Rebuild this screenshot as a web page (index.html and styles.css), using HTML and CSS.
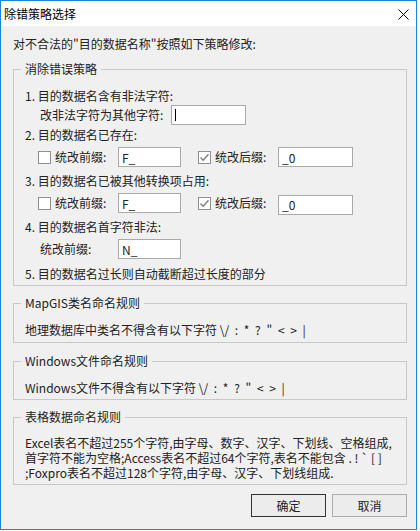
FILE: index.html
```html
<!DOCTYPE html>
<html lang="zh-CN">
<head>
    <meta charset="UTF-8">
    <title>除错策略选择</title>
    <link rel="stylesheet" href="styles.css">
</head>
<body>
    <div class="dialog">
        <div class="titlebar">
            <span class="title">除错策略选择</span>
            <svg class="close" width="11" height="11" viewBox="0 0 11 11">
                <path d="M0.5 0.5 L10.5 10.5 M10.5 0.5 L0.5 10.5" stroke="#000" stroke-width="1" fill="none"/>
            </svg>
        </div>

        <div class="content">
            <p class="intro">对不合法的"目的数据名称"按照如下策略修改:</p>

            <div class="group group-strategy">
                <span class="group-title">消除错误策略</span>

                <div class="line">1. 目的数据名含有非法字符:</div>
                <div class="row row-replace">
                    <span class="label label-replace">改非法字符为其他字符:</span>
                    <div class="textbox textbox-wide"><span class="caret"></span></div>
                </div>

                <div class="line line-after-replace">2. 目的数据名已存在:</div>
                <div class="row row-checks">
                    <span class="check"></span>
                    <span class="label label-short">统改前缀:</span>
                    <input class="textbox textbox-narrow" type="text" value="F_">
                    <span class="check checked">
                        <svg width="11" height="11" viewBox="0 0 11 11"><path d="M1.5 5.5 L4.2 8.3 L9.5 2.2" stroke="#7a7a7a" stroke-width="1.3" fill="none"/></svg>
                    </span>
                    <span class="label label-short">统改后缀:</span>
                    <input class="textbox textbox-wide" type="text" value="_0">
                </div>

                <div class="line">3. 目的数据名已被其他转换项占用:</div>
                <div class="row row-checks">
                    <span class="check"></span>
                    <span class="label label-short">统改前缀:</span>
                    <input class="textbox textbox-narrow" type="text" value="F_">
                    <span class="check checked">
                        <svg width="11" height="11" viewBox="0 0 11 11"><path d="M1.5 5.5 L4.2 8.3 L9.5 2.2" stroke="#7a7a7a" stroke-width="1.3" fill="none"/></svg>
                    </span>
                    <span class="label label-short">统改后缀:</span>
                    <input class="textbox textbox-wide textbox-low" type="text" value="_0">
                </div>

                <div class="line">4. 目的数据名首字符非法:</div>
                <div class="row row-prefix">
                    <span class="label label-prefix">统改前缀:</span>
                    <input class="textbox textbox-narrow" type="text" value="N_">
                </div>

                <div class="line line-last">5. 目的数据名过长则自动截断超过长度的部分</div>
            </div>

            <div class="group group-mapgis">
                <span class="group-title">MapGIS类名命名规则</span>
                <div class="line">地理数据库中类名不得含有以下字符 <span class="symbols">\/ : * ? " &lt; &gt; |</span></div>
            </div>

            <div class="group group-windows">
                <span class="group-title">Windows文件命名规则</span>
                <div class="line">Windows文件不得含有以下字符 <span class="symbols">\/ : * ? " &lt; &gt; |</span></div>
            </div>

            <div class="group group-table">
                <span class="group-title">表格数据命名规则</span>
                <div class="rules">
                    <div class="rule-line">Excel表名不超过255个字符,由字母、数字、汉字、下划线、空格组成,</div>
                    <div class="rule-line">首字符不能为空格;Access表名不超过64个字符,表名不能包含 . ! ` [ ]</div>
                    <div class="rule-line">;Foxpro表名不超过128个字符,由字母、汉字、下划线组成.</div>
                </div>
            </div>

            <div class="actions">
                <button class="btn btn-default" type="button">确定</button>
                <button class="btn" type="button">取消</button>
            </div>
        </div>
    </div>
</body>
</html>
```

FILE: styles.css
```css
* {
    box-sizing: border-box;
    margin: 0;
    padding: 0;
}

body {
    background: #fff;
    font-family: "Noto Sans CJK SC", "Liberation Sans", sans-serif;
    font-size: 12px;
    color: #222;
}

.dialog {
    width: 417px;
    height: 530px;
    border: 1px solid #1883d7;
    background: #f0f0f0;
}

.titlebar {
    height: 25px;
    background: #fff;
    display: flex;
    align-items: center;
    justify-content: space-between;
    padding: 0 7px 0 3px;
}

.title {
    color: #000;
    line-height: 18px;
}

.close {
    display: block;
    margin-top: 1px;
}

.content {
    padding: 9px 9px 0 12px;
}

.intro {
    line-height: 18px;
}

/* group boxes */
.group {
    position: relative;
    border: 1px solid #c8c8c8;
    margin-top: 17px;
    padding: 17px 4px 2px 11px;
}

.group-title {
    position: absolute;
    top: -10px;
    left: 7px;
    padding: 0 4px;
    line-height: 18px;
    background: #f0f0f0;
    white-space: nowrap;
}

.group-strategy {
    margin-top: 16px;
}

.group-mapgis {
    padding-bottom: 3px;
}

.group-windows {
    margin-top: 18px;
}

.group-table {
    padding-bottom: 4px;
}

.line {
    height: 18px;
    line-height: 18px;
    white-space: nowrap;
}

.symbols {
    word-spacing: 3px;
}

.row {
    height: 20px;
    display: flex;
    align-items: center;
    white-space: nowrap;
}

.line + .row {
    margin-top: 3px;
}

.row + .line {
    margin-top: 5px;
}

.line + .row-replace {
    margin-top: 0;
}

.row + .line-after-replace {
    margin-top: 1px;
}

.row + .line-last {
    margin-top: 6px;
}

.row-replace,
.row-prefix {
    padding-left: 15px;
}

.row-checks {
    padding-left: 13px;
}

.label {
    line-height: 18px;
}

.label-replace {
    width: 131px;
}

.label-short {
    width: 63px;
}

.label-prefix {
    width: 78px;
}

/* inputs */
.textbox {
    display: block;
    height: 20px;
    border: 1px solid #a9a9a9;
    background: #fff;
    padding: 0 3px;
    font: inherit;
    color: #222;
    outline: none;
    position: relative;
}

.textbox-narrow {
    width: 63px;
    margin-right: 17px;
}

.textbox-wide {
    width: 75px;
}

.textbox-low {
    margin-top: 3px;
}

.caret {
    position: absolute;
    left: 3px;
    top: 3px;
    width: 1px;
    height: 12px;
    background: #000;
}

.check {
    width: 13px;
    height: 13px;
    border: 1px solid #8f8f8f;
    background: #fff;
    margin-right: 4px;
    display: flex;
    align-items: center;
    justify-content: center;
}

.check svg {
    display: block;
}

.rule-line {
    height: 15px;
    line-height: 15px;
    white-space: nowrap;
}

/* buttons */
.actions {
    display: flex;
    justify-content: flex-end;
    gap: 6px;
    margin-top: 9px;
}

.btn {
    width: 75px;
    height: 23px;
    border: 1px solid #adadad;
    background: #ececec;
    font: inherit;
    color: #222;
}

.btn-default {
    border-color: #333;
}
```
